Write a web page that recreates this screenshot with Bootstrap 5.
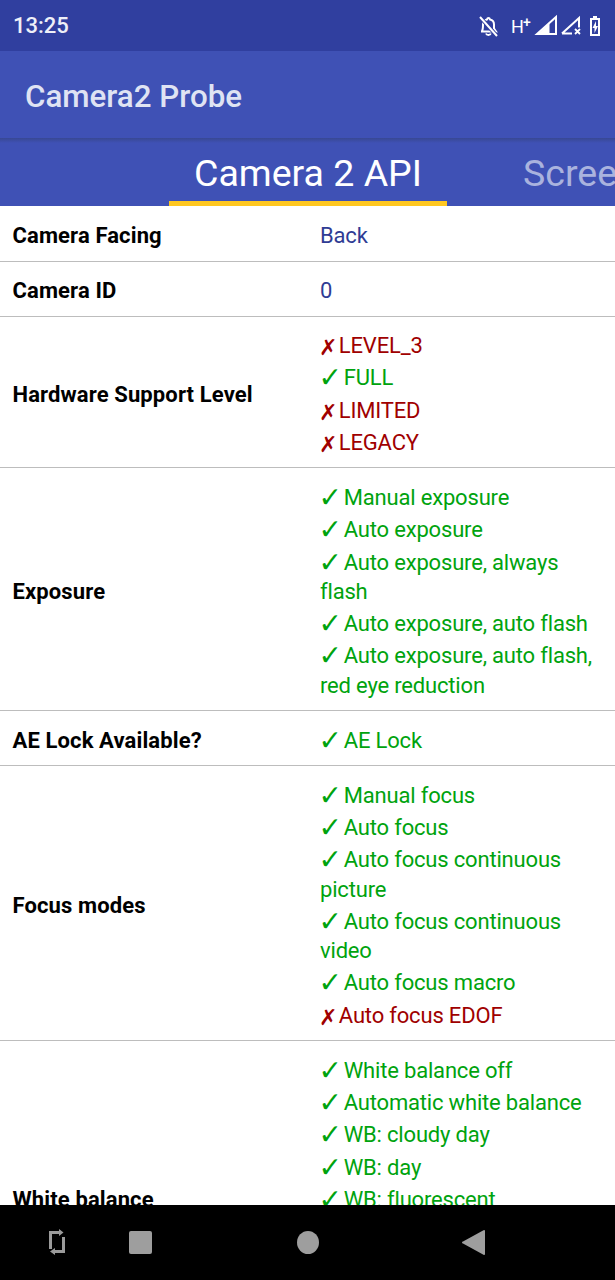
<!DOCTYPE html>
<html lang="en">
<head>
<meta charset="utf-8">
<title>Camera2 Probe</title>
<link href="https://cdn.jsdelivr.net/npm/bootstrap@5.3.0/dist/css/bootstrap.min.css" rel="stylesheet">
<style>
html,body{height:100%;margin:0}
body{font-family:Roboto,"Liberation Sans",sans-serif;background:#fff}
.shell{height:1280px;width:615px}
.statusbar{height:51px;background:#303f9f;color:#fff;padding:0 11px 0 13px;flex:none}
.statustime{font-size:22px;font-weight:500;color:#eef0f8}
.appbar{height:87px;background:#3f51b5;flex:none;padding:6px 25px 0;color:#dfe3f3;font-size:31.300px;font-weight:500}
.tabstrip{height:68px;background:#3f51b5;flex:none;padding-left:169px;overflow:hidden;white-space:nowrap;background-image:linear-gradient(#384893,#3f51b5 5px)}
.tabitem{font-size:37.500px;padding:0 25px;height:68px;line-height:70px;color:#aab3de;flex:none}
.tabitem-on{color:#fff;border-bottom:5px solid #ffc720;width:278px;margin-right:76px}
.content{flex:1 1 0;overflow:hidden;min-height:0;padding-top:.6px}
.proberow{border-bottom:1px solid #bdbdbd;padding:13px 13px 8.700px 12.500px;font-size:22px;line-height:29.300px}
.probekey{width:307.500px;font-weight:700;color:#000;flex:none;letter-spacing:.12px}
.probeval{flex:1;color:#2f3c94;letter-spacing:-.18px}
.probeval>div{padding:1.500px 0}
.yes{color:#00a30e}
.no{color:#a00000}
.mk{font-family:"DejaVu Sans",sans-serif;font-weight:700;line-height:0;display:inline-block}
.yes .mk{font-size:28px;letter-spacing:-4.500px;margin-left:-1.500px;margin-right:1px;vertical-align:-2px}
.no .mk{font-size:22px;letter-spacing:-4.400px;margin-left:-1px;margin-right:.500px;vertical-align:-2px}
.navbottom{height:75px;background:#000;flex:none}
</style>
</head>
<body>
<div class="shell d-flex flex-column overflow-hidden">
  <div class="statusbar d-flex align-items-center justify-content-between">
    <span class="statustime">13:25</span>
    <svg width="130" height="28" viewBox="0 0 130 28">
      <g fill="none" stroke="#fff" stroke-width="2">
        <path d="M8 19c1-1.500 1-3.500 1-6.500 0-3 2-4.500 4-5 .5-2 2.500-2 3 0 2.500.5 4 2.500 4 5v4l2 3H8z"/>
        <path d="M6 5l17 19" stroke="#303f9f" stroke-width="4"/><path d="M6 5l17 19"/>
        <path d="M12 21.500c.8 2 4 2 4.800 0"/>
      </g>
      <text x="37" y="20.500" fill="#fff" font-family="Roboto" font-size="18">H</text>
      <text x="49" y="15" fill="#fff" font-family="Roboto" font-size="14" font-weight="500">+</text>
      <path d="M63 22L82 5v17z" fill="none" stroke="#fff" stroke-width="2"/>
      <path d="M64 22L75 12v10z" fill="#fff" stroke="#fff"/>
      <path d="M88 21.500L105 6v9.500M88 21.500h10" fill="none" stroke="#fff" stroke-width="2"/>
      <path d="M101 17l5 5M106 17l-5 5" stroke="#fff" stroke-width="1.800"/>
      <path d="M116 6h3V4h4v2h3v18h-10zM118 8v14h6V8zM122 9l-3.500 7h2v5l3.500-7h-2z" fill="#fff" fill-rule="evenodd"/>
    </svg>
  </div>
  <div class="appbar d-flex align-items-center">Camera2 Probe</div>
  <div class="tabstrip d-flex">
    <div class="tabitem tabitem-on">Camera 2 API</div>
    <div class="tabitem p-0">Screen</div>
  </div>
  <div class="content">
    <div class="proberow d-flex align-items-center"><div class="probekey">Camera Facing</div><div class="probeval"><div>Back</div></div></div>
    <div class="proberow d-flex align-items-center"><div class="probekey">Camera ID</div><div class="probeval"><div>0</div></div></div>
    <div class="proberow d-flex align-items-center"><div class="probekey">Hardware Support Level</div><div class="probeval">
      <div class="no"><span class="mk">✗</span> LEVEL_3</div>
      <div class="yes"><span class="mk">✓</span> FULL</div>
      <div class="no"><span class="mk">✗</span> LIMITED</div>
      <div class="no"><span class="mk">✗</span> LEGACY</div>
    </div></div>
    <div class="proberow d-flex align-items-center"><div class="probekey">Exposure</div><div class="probeval">
      <div class="yes"><span class="mk">✓</span> Manual exposure</div>
      <div class="yes"><span class="mk">✓</span> Auto exposure</div>
      <div class="yes"><span class="mk">✓</span> Auto exposure, always flash</div>
      <div class="yes"><span class="mk">✓</span> Auto exposure, auto flash</div>
      <div class="yes"><span class="mk">✓</span> Auto exposure, auto flash, red eye reduction</div>
    </div></div>
    <div class="proberow d-flex align-items-center"><div class="probekey">AE Lock Available?</div><div class="probeval"><div class="yes"><span class="mk">✓</span> AE Lock</div></div></div>
    <div class="proberow d-flex align-items-center"><div class="probekey">Focus modes</div><div class="probeval">
      <div class="yes"><span class="mk">✓</span> Manual focus</div>
      <div class="yes"><span class="mk">✓</span> Auto focus</div>
      <div class="yes"><span class="mk">✓</span> Auto focus continuous picture</div>
      <div class="yes"><span class="mk">✓</span> Auto focus continuous video</div>
      <div class="yes"><span class="mk">✓</span> Auto focus macro</div>
      <div class="no"><span class="mk">✗</span> Auto focus EDOF</div>
    </div></div>
    <div class="proberow d-flex align-items-center"><div class="probekey">White balance</div><div class="probeval">
      <div class="yes"><span class="mk">✓</span> White balance off</div>
      <div class="yes"><span class="mk">✓</span> Automatic white balance</div>
      <div class="yes"><span class="mk">✓</span> WB: cloudy day</div>
      <div class="yes"><span class="mk">✓</span> WB: day</div>
      <div class="yes"><span class="mk">✓</span> WB: fluorescent</div>
      <div class="yes"><span class="mk">✓</span> WB: incandescent</div>
      <div class="yes"><span class="mk">✓</span> WB: shade</div>
      <div class="yes"><span class="mk">✓</span> WB: twilight</div>
      <div class="yes"><span class="mk">✓</span> WB: warm fluorescent</div>
    </div></div>
  </div>
  <div class="navbottom">
    <svg width="615" height="75" viewBox="0 0 615 75">
      <path d="M59 24l4.500 3.500L59 31zM55 43l-5 3.500 5 3.500z" fill="#9a9a9a"/>
      <path d="M60 27.500H50.500V44M53 46.500h10.500V32" fill="none" stroke="#9a9a9a" stroke-width="3"/>
      <rect x="129" y="26" width="23" height="23" rx="2" fill="#9e9e9e"/>
      <ellipse cx="308" cy="37.500" rx="11" ry="11.500" fill="#9e9e9e"/>
      <path d="M485 26v23a1 1 0 0 1-1.500.8L463 38.500a1 1 0 0 1 0-2l20.500-11.300a1 1 0 0 1 1.500.8z" fill="#9e9e9e"/>
    </svg>
  </div>
</div>
<script src="https://cdn.jsdelivr.net/npm/bootstrap@5.3.0/dist/js/bootstrap.bundle.min.js"></script>
</body>
</html>
